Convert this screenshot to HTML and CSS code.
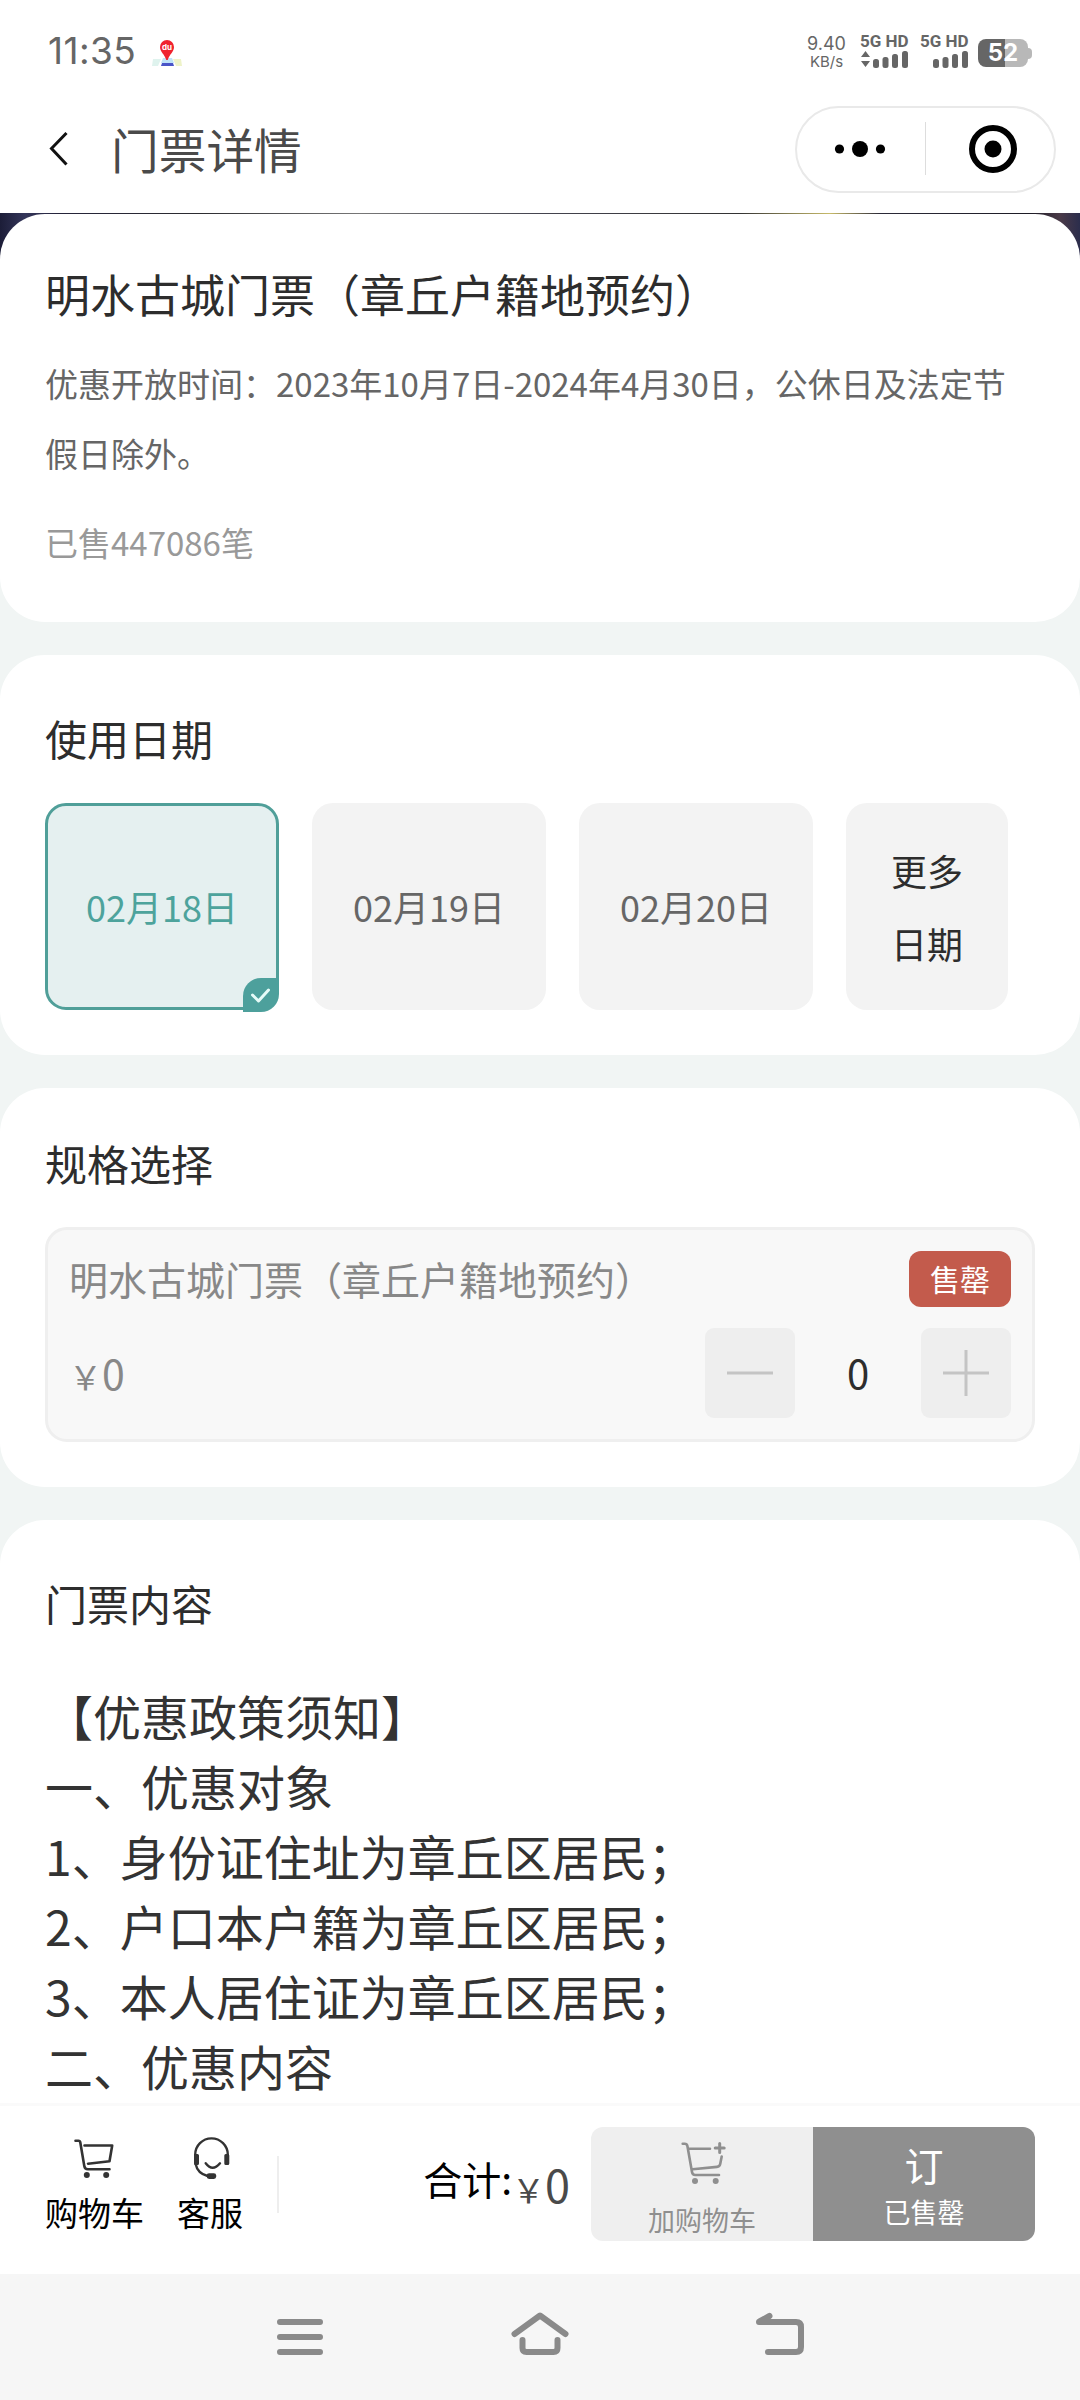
FILE: index.html
```html
<!DOCTYPE html>
<html lang="zh-CN">
<head>
<meta charset="utf-8">
<title>门票详情</title>
<link rel="stylesheet" href="styles.css">
</head>
<body>
<div class="phone">
  <div class="status">
    <span class="clock">11:35</span>
    <svg class="pin" width="32" height="30" viewBox="0 0 32 30">
      <path d="M2 20h8l-3 7H1z" fill="#dff3ee"/><path d="M22 20h8l1 7h-6z" fill="#eef3c8"/>
      <path d="M12 19h9l2 5H10z" fill="#bfe3f8"/><path d="M11 24h11l1 3H10z" fill="#4a55c8"/>
      <path d="M16 1a7 7 0 0 1 7 7c0 5-4.500 7-6.300 13h-1.400C13.500 15 9 13 9 8a7 7 0 0 1 7-7z" fill="#f0232f"/>
      <text x="16" y="11" text-anchor="middle" class="pin-text">du</text>
    </svg>
    <div class="rate"><span>9.40</span><span class="unit">KB/s</span></div>
    <div class="signal">
      <span>5G HD</span>
      <svg width="48" height="18" viewBox="0 0 48 18" fill="#666"><path d="M5.500 1l4.500 6H1zM5.500 17l4.500-6H1z"/><rect x="13" y="9" width="6" height="9" rx="2.500"/><rect x="22.500" y="7" width="6" height="11" rx="2.500"/><rect x="32" y="4" width="6" height="14" rx="2.500"/><rect x="42" y="1" width="6" height="17" rx="2.500"/></svg>
    </div>
    <div class="signal">
      <span>5G HD</span>
      <svg width="48" height="18" viewBox="0 0 48 18" fill="#666"><rect x="13" y="9" width="6" height="9" rx="2.500"/><rect x="22.500" y="7" width="6" height="11" rx="2.500"/><rect x="32" y="4" width="6" height="14" rx="2.500"/><rect x="42" y="1" width="6" height="17" rx="2.500"/></svg>
    </div>
    <div class="battery"><span>52</span><i></i></div>
  </div>

  <div class="titlebar">
    <svg class="back" width="20" height="36" viewBox="0 0 20 36"><path d="M17.500 2L2.500 17.500 17.500 33.500" fill="none" stroke="#111" stroke-width="3"/></svg>
    <h1>门票详情</h1>
    <div class="capsule">
      <svg width="52" height="20" viewBox="0 0 52 20"><circle cx="5.500" cy="10" r="4.600"/><circle cx="26" cy="10" r="8"/><circle cx="46.500" cy="10" r="4.600"/></svg>
      <i class="capsule-line"></i>
      <svg width="50" height="50" viewBox="0 0 50 50"><circle cx="25" cy="25" r="21" fill="none" stroke="#000" stroke-width="6"/><circle cx="25" cy="25" r="8.500"/></svg>
    </div>
  </div>

  <main class="scroll">
    <div class="hero"></div>
    <section class="card info">
      <h2>明水古城门票（章丘户籍地预约）</h2>
      <p class="desc">优惠开放时间：2023年10月7日-2024年4月30日，公休日及法定节假日除外。</p>
      <p class="sold">已售447086笔</p>
    </section>

    <section class="card dates">
      <h3>使用日期</h3>
      <div class="date-row">
        <div class="date active">02月18日
          <span class="tick"><svg width="36" height="34" viewBox="0 0 36 34"><path d="M9.500 17l6 6 10-11" fill="none" stroke="#e6fbf8" stroke-width="3" stroke-linecap="round" stroke-linejoin="round"/></svg></span>
        </div>
        <div class="date">02月19日</div>
        <div class="date">02月20日</div>
        <div class="date more">更多<br>日期</div>
      </div>
    </section>

    <section class="card spec">
      <h3>规格选择</h3>
      <div class="sku">
        <div class="sku-top"><span class="sku-name">明水古城门票（章丘户籍地预约）</span><span class="badge">售罄</span></div>
        <div class="sku-bottom">
          <span class="price"><small>￥</small>0</span>
          <div class="stepper">
            <button><svg width="46" height="46" viewBox="0 0 46 46"><path d="M0 23h46" stroke="#c4c4c4" stroke-width="3"/></svg></button>
            <span>0</span>
            <button><svg width="46" height="46" viewBox="0 0 46 46"><path d="M0 23h46M23 0v46" stroke="#c4c4c4" stroke-width="3"/></svg></button>
          </div>
        </div>
      </div>
    </section>

    <section class="card content">
      <h3>门票内容</h3>
      <div class="rules">
        <p>【优惠政策须知】</p>
        <p>一、优惠对象</p>
        <p>1、身份证住址为章丘区居民；</p>
        <p>2、户口本户籍为章丘区居民；</p>
        <p>3、本人居住证为章丘区居民；</p>
        <p>二、优惠内容</p>
      </div>
    </section>
  </main>

  <footer class="bar">
    <div class="tool">
      <svg width="42" height="44" viewBox="0 0 42 44" fill="none" stroke="#333" stroke-width="2.600" stroke-linecap="round" stroke-linejoin="round"><path d="M1.500 4.700h3q1.500 0 1.800 1.800l4 23.500q.600 3.300 3.500 3.300h21.700M10.500 9.500H38.200l-2.700 15.800L14 27.700"/><circle cx="12.800" cy="39" r="3" fill="#333" stroke="none"/><circle cx="32.200" cy="39" r="3" fill="#333" stroke="none"/></svg>
      <span>购物车</span>
    </div>
    <div class="tool">
      <svg width="42" height="44" viewBox="0 0 42 44" fill="none" stroke="#333" stroke-width="2.400" stroke-linecap="round"><path d="M6.200 20.500V18.700A16.300 16.300 0 0 1 38.800 18.700V20.500M6.600 28q2 9.500 12 12M16.700 27.300q6.800 9 14.300 0"/><path d="M5 19.500q0-1.500 1.500-1.500h2q1.500 0 1.500 1.500v8q0 1.500-1.500 1.500h-2q-1.500 0-1.500-1.500zM35.300 19.500q0-1.500 1.500-1.500h2q1.500 0 1.500 1.500v8q0 1.500-1.500 1.500h-2q-1.500 0-1.500-1.500z" fill="#333" stroke="none"/><rect x="17.700" y="37.200" width="9.500" height="5.800" rx="2.400" fill="#333" stroke="none"/></svg>
      <span>客服</span>
    </div>
    <i class="bar-line"></i>
    <div class="total"><b>合计:</b><small>￥</small><span>0</span></div>
    <div class="actions">
      <div class="add">
        <svg width="44" height="44" viewBox="0 0 44 44" fill="none" stroke="#8f8f8f" stroke-width="2.600" stroke-linecap="round" stroke-linejoin="round"><path d="M2.700 2.700h2q2.200 0 2.700 2.300l4.600 26q.500 3 3.200 3H39M9.300 7.700H30M41.700 15.500l-1.500 7.500q-.500 2.700-3.200 2.900L12.700 28.300"/><path d="M39.700 2.500v9M35.200 7h9" stroke-width="3"/><circle cx="15" cy="40" r="3" fill="#8f8f8f" stroke="none"/><circle cx="35.700" cy="40" r="3" fill="#8f8f8f" stroke="none"/></svg>
        <span>加购物车</span>
      </div>
      <div class="order"><b>订</b><span>已售罄</span></div>
    </div>
  </footer>

  <nav class="sysnav">
    <svg width="60" height="50" viewBox="0 0 60 50"><path d="M10 10h40M10 25h40M10 40h40"/></svg>
    <svg width="60" height="50" viewBox="0 0 60 50"><path d="M4.500 22L30 3.500 55.500 22M12.500 28v8q0 4 4 4h27q4 0 4-4v-8"/></svg>
    <svg width="60" height="50" viewBox="0 0 60 50"><path d="M19.500 4L9.500 9.500M9 10h37q5 0 5 5v20q0 5-5 5H18"/></svg>
  </nav>
</div>
</body>
</html>
```

FILE: styles.css
```css
* { box-sizing: border-box; margin: 0; padding: 0; }
body { font-family: "Noto Sans CJK SC", sans-serif; color: #333; background: #fff; }
h1, h2, h3, b { font-weight: 400; }
i { font-style: normal; }
svg { display: block; flex: none; overflow: visible; }

.phone { width: 1080px; height: 2400px; display: flex; flex-direction: column; overflow: hidden; }

.status { height: 100px; padding: 0 47px 0 48px; display: flex; align-items: flex-start; color: #666; font-family: Inter, sans-serif; }
.clock { width: 104px; margin-top: 31px; font-size: 37px; line-height: 40px; letter-spacing: .4px; }
.pin { margin-top: 39px; margin-left: -1px; }
.pin-text { font: 700 8px Inter, sans-serif; fill: #fff; }
.rate { margin: 35px 0 0 auto; width: 41px; display: flex; flex-direction: column; align-items: center; font-size: 18px; line-height: 18px; }
.unit { font-size: 15px; }
.signal { width: 48px; margin: 33px 0 0 12px; display: flex; flex-direction: column; font: 700 17px/17px Roboto, sans-serif; white-space: nowrap; }
.rate + .signal { margin-left: 13px; }
.battery { width: 55px; height: 28px; margin: 39px 0 0 10px; display: flex; align-items: center; }
.battery span { width: 50px; height: 28px; border-radius: 8px; background: linear-gradient(90deg, #666 27px, #b8b8b8 27px); color: #fff; font: 700 24px/28px Inter, sans-serif; text-align: center; }
.battery i { width: 4px; height: 11px; border-radius: 0 4px 4px 0; background: #b8b8b8; }

.titlebar { height: 113px; padding: 6px 24px 0 49px; display: flex; align-items: flex-start; }
.back { margin-top: 25px; }
.titlebar h1 { margin: 13px 0 0 42px; font-size: 47.7px; line-height: 60px; color: #4a4a4a; }
.capsule { margin-left: auto; width: 261px; height: 87px; border: 2px solid #e9e9e9; border-radius: 44px; display: flex; align-items: center; padding: 0 36px 2px 37px; justify-content: space-between; }
.capsule-line { width: 1px; height: 53px; margin-left: 2px; margin-right: 6px; background: #ddd; }

.scroll { flex: 1; min-height: 0; overflow: hidden; background: #f1f5f4; display: flex; flex-direction: column; gap: 33px; }
.hero { flex: none; height: 60px; margin-bottom: -92px; background: linear-gradient(90deg, #1c1d38, #34365a 25px, #25243a 60px, #2c2c30 200px, #777 360px, #44444f 540px, #333 740px, #c8bb6a 830px, #2b2a38 880px, #1d1c26 1030px, #4a3a48 1060px, #2b2d4c); }
.card { flex: none; background: #fff; border-radius: 45px; padding: 0 45px; }
.card h3 { font-size: 42px; line-height: 60px; color: #2d2d2d; }

.info { height: 408px; padding-top: 50px; }
.info h2 { font-size: 45px; line-height: 60px; color: #2d2d2d; }
.desc { margin-top: 24px; font-size: 33px; line-height: 70px; color: #666; }
.sold { margin-top: 24px; font-size: 33px; line-height: 60px; color: #999; }

.dates { height: 400px; padding-top: 53px; }
.date-row { margin-top: 35px; display: flex; gap: 33px; }
.date { position: relative; width: 234px; height: 207px; border-radius: 21px; background: #f3f3f3; display: flex; align-items: center; justify-content: center; font-size: 36px; line-height: 73px; color: #666; }
.date.active { border: 3px solid #509f99; background: #e5f0f0; color: #4da39c; }
.date.more { width: 162px; color: #2d2d2d; }
.tick { position: absolute; right: -3px; bottom: -5px; width: 36px; height: 34px; background: #4da09c; border-radius: 18px 0 18px 0; }

.spec { height: 399px; padding-top: 45px; }
.sku { margin-top: 34px; height: 215px; border: 3px solid #efefef; border-radius: 22px; background: #f8f8f8; padding: 21px 21px 0; color: #888; }
.sku-top { display: flex; justify-content: space-between; align-items: center; height: 56px; }
.sku-name { font-size: 39px; line-height: 54px; margin-top: -2px; }
.badge { width: 102px; height: 56px; border-radius: 12px; background: #c35b4c; color: #fff; font-size: 30px; line-height: 55px; text-align: center; }
.sku-bottom { margin-top: 21px; display: flex; justify-content: space-between; }
.price { font-size: 41px; line-height: 88px; }
.price small { font-size: 33px; }
.stepper { display: flex; }
.stepper button { width: 90px; height: 90px; border: 0; border-radius: 9px; background: #eee; display: flex; align-items: center; justify-content: center; }
.stepper span { width: 126px; font-size: 40px; line-height: 89px; text-align: center; color: #2d2d2d; }

.content { height: 700px; padding-top: 53px; }
.rules { margin-top: 47px; font-size: 48px; line-height: 70px; }

.bar { flex: none; height: 171px; border-top: 3px solid #fafafa; background: #fff; padding: 0 45px; display: flex; align-items: flex-start; color: #000; }
.tool { margin-top: 30px; display: flex; flex-direction: column; align-items: center; font-size: 33px; line-height: 40px; }
.tool + .tool { margin-left: 33px; }
.tool svg { height: 44px; margin-bottom: 12px; }
.bar-line { width: 2px; height: 57px; margin: 50px 0 0 34px; background: #eee; }
.total { margin: 42px 21px 0 auto; color: #4a4a4a; line-height: 60px; white-space: nowrap; }
.total b { font-size: 39px; color: #000; vertical-align: 8px; }
.total small { font-size: 33px; }
.total span { font-size: 45px; }
.actions { margin-top: 21px; width: 444px; height: 114px; border-radius: 12px; overflow: hidden; display: flex; text-align: center; }
.actions > div { flex: 1; display: flex; flex-direction: column; align-items: center; font-size: 27px; }
.add { background: #efefef; color: #8f8f8f; padding-top: 14px; }
.add span { margin-top: 15px; line-height: 40px; }
.order { background: #8f8f8f; color: #fff; padding-top: 11px; }
.order b { font-size: 39px; line-height: 52px; }
.order span { margin-top: 2px; line-height: 40px; }

.sysnav { flex: none; height: 126px; background: #f6f6f6; display: flex; justify-content: center; gap: 180px; padding-top: 38px; }
.sysnav svg { fill: none; stroke: #8a8a8a; stroke-width: 6; stroke-linecap: round; stroke-linejoin: round; }
```
